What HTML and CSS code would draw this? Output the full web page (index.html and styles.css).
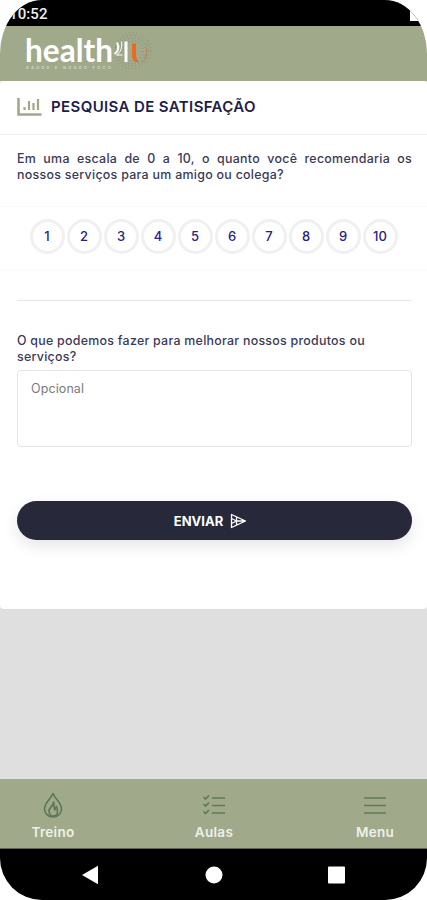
FILE: index.html
```
<!DOCTYPE html>
<html lang="pt-BR">
<head>
<meta charset="utf-8">
<meta name="viewport" content="width=device-width, initial-scale=1">
<title>Pesquisa de Satisfação</title>
<link rel="stylesheet" href="styles.css">
</head>
<body>
<div class="phone">
  <div class="status"><span class="time">10:52</span><span class="battery"></span></div>
  <header class="brand">
    <svg class="logo" width="134" height="46" viewBox="0 -2 134 46">
      <g fill="none" stroke="#858d78" stroke-width="1" stroke-dasharray="1 2.500">
        <circle cx="113" cy="21" r="18"/><circle cx="113" cy="21" r="15.500"/><circle cx="113" cy="21" r="13"/><circle cx="113" cy="21" r="10"/>
      </g>
      <text class="logo-name" x="5" y="32" textLength="88" lengthAdjust="spacingAndGlyphs">health</text>
      <path d="M97 12.500c2.500 5 1 9-2.500 11.500" fill="none" stroke="#fff" stroke-width="2"/>
      <path d="M101.500 11.500c1 6-1 11-5 13.500h6" fill="none" stroke="#fff" stroke-width="1"/>
      <path d="M106 11.500V32" fill="none" stroke="#fff" stroke-width="3"/>
      <path d="M112 13.500h4V25c0 3.500 1 5.500 3.500 7-4.500.8-7.500-2-7.500-7z" fill="#ee6820"/>
      <path d="M121.500 32c4-2 6-7 5-14" fill="none" stroke="#c78155" stroke-width="1"/>
      <text class="logo-tag" x="6" y="39" textLength="85">SAÚDE É NOSSO FOCO</text>
    </svg>
  </header>
  <main>
    <section class="card">
      <div class="title">
        <svg width="25" height="20" viewBox="0 0 25 20" fill="none" stroke="#a0a889">
          <path d="M1.500 1v16.500H24.500" stroke-width="2.600"/>
          <path d="M7.500 13v-3M12 13V4M16.500 13V6M21 13V2" stroke-width="2.200"/>
        </svg>
        <h1>PESQUISA DE SATISFAÇÃO</h1>
      </div>
      <p class="question">Em uma escala de 0 a 10, o quanto você recomendaria os nossos serviços para um amigo ou colega?</p>
      <div class="scale">
        <button>1</button><button>2</button><button>3</button><button>4</button><button>5</button><button>6</button><button>7</button><button>8</button><button>9</button><button>10</button>
      </div>
      <hr>
      <label class="label" for="msg">O que podemos fazer para melhorar nossos produtos ou serviços?</label>
      <textarea id="msg" placeholder="Opcional"></textarea>
      <button class="send">ENVIAR
        <svg width="17" height="16" viewBox="0 0 17 16" fill="none" stroke="#fff" stroke-width="1.300" stroke-linejoin="round"><path d="M1.500 1.500 15.500 8 1.500 14.500zM1.500 5.500l5 2.500-5 2.500M6.500 4.500V11.500M6.500 8h8"/></svg>
      </button>
    </section>
  </main>
  <nav class="tabs">
    <a class="tab"><svg width="24" height="26" viewBox="0 0 24 26" fill="none" stroke="#5a7854" stroke-width="1.600" stroke-linejoin="round"><path d="M12 1.500C10.500 6.500 3.500 10 3.500 17a8.500 8 0 0 0 17 0C20.500 10 13.500 6.500 12 1.500z"/><path d="M12.500 10c.5 4-4.500 5-4.500 9 0 3 2 5 4.300 5s4.200-2 4.200-4.500c0-2-.8-3.500-.8-5-1.400 1-1.700 2-1.700 3.500-1.700-2-.5-5-1.500-8z"/></svg><span>Treino</span></a>
    <a class="tab"><svg width="24" height="26" viewBox="0 0 24 26" fill="none" stroke="#5f7b58" stroke-width="1.700"><path d="M1.500 5l2 2L7 3.500M1.500 12l2 2L7 10.500M1.500 19.500l2 2L7 18M10 6h13M10 13.500h13M10 21h13"/></svg><span>Aulas</span></a>
    <a class="tab"><svg width="24" height="26" viewBox="0 0 24 26" fill="none" stroke="#5f7b58" stroke-width="1.700"><path d="M1 6h22M1 13.500h22M1 21h22"/></svg><span>Menu</span></a>
  </nav>
  <div class="system">
    <svg width="20" height="20" viewBox="0 0 20 20" fill="#fff"><path d="M2 10 18 .8v18.400z"/></svg>
    <svg width="20" height="20" viewBox="0 0 20 20" fill="#fff"><circle cx="10" cy="10" r="8.500"/></svg>
    <svg width="20" height="20" viewBox="0 0 20 20" fill="#fff"><rect x="1" y="1.500" width="17" height="17" rx="1"/></svg>
  </div>
</div>
</body>
</html>
```
FILE: styles.css
```
* { box-sizing: border-box; }
body { margin: 0; background: #fff; font-family: Inter, "Liberation Sans", sans-serif; color: #3a3a58; }
.phone { width: 427px; height: 900px; overflow: hidden; display: flex; flex-direction: column; background: #dfdfdf; border-radius: 42px 42px 42px 42px / 54px 54px 42px 42px; }
.status { height: 26px; flex: none; background: #000; display: flex; justify-content: space-between; padding: 6px 7px 0 9px; }
.time { color: #eee; font: 500 15px/17px Roboto, sans-serif; letter-spacing: .1px; }
.battery { width: 10px; height: 13px; margin-top: 2px; background: #fff; }
.brand { height: 55px; flex: none; background: #a1a98b; padding: 2px 0 0 20px; }
.logo { display: block; overflow: visible; }
.logo-name { font: 700 32px Lato, sans-serif; fill: #fff; }
.logo-tag { font: 700 4px Inter, sans-serif; fill: #d0d5c2; }
main { flex: 1; }
.card { height: 528px; background: #fff; border-radius: 3px 3px 4px 4px; padding: 0 15px 0 17px; display: flex; flex-direction: column; }
.title { height: 54px; flex: none; margin: 0 -15px 0 -17px; padding: 0 0 2px 17px; display: flex; align-items: center; gap: 9px; border-bottom: 1px solid #f0f0f0; }
h1 { margin: 0; font-size: 15px; font-weight: 600; line-height: 20px; letter-spacing: .38px; color: #211d49; white-space: nowrap; }
.question { margin: 16px 0 0; font-size: 12.400px; line-height: 15.500px; font-weight: 500; letter-spacing: .29px; text-align: justify; }
.scale { margin: 24px -15px 0 -17px; height: 64px; flex: none; border-top: 1px solid #fafafa; border-bottom: 1px solid #fafafa; display: flex; align-items: center; justify-content: center; gap: 2px; padding-bottom: 4px; }
.scale button { width: 35px; height: 35px; padding: 0; border: 3px solid #f0f0f0; border-radius: 50%; background: #fff; color: #29247c; font: 500 13px Inter, sans-serif; }
hr { width: 100%; margin: 30px 0 0; border: 0; border-top: 1px solid #e6e6e6; }
.label { margin-top: 32px; font-size: 12.400px; line-height: 15.500px; font-weight: 500; letter-spacing: .27px; }
textarea { margin-top: 6px; width: 395px; height: 77px; flex: none; border: 1px solid #e3e5e5; border-radius: 4px; padding: 9px 13px; resize: none; font: 400 12.500px/17px Inter, sans-serif; letter-spacing: .1px; color: #333; }
textarea::placeholder { color: #7b7b84; opacity: 1; }
.send { margin-top: 54px; height: 39px; flex: none; border: 0; border-radius: 20px; background: #28283b; color: #fff; font: 700 13px Inter, sans-serif; display: flex; align-items: center; justify-content: center; gap: 7px; padding: 0 14px 0 6px; box-shadow: 0 6px 16px rgba(0,0,0,.1); }
.tabs { height: 70px; flex: none; background: #a1a98b; display: flex; justify-content: space-between; padding: 13px 22px 0 23px; border-bottom: 1px solid #5e6450; }
.tab { width: 60px; display: flex; flex-direction: column; align-items: center; gap: 5px; color: #eef0e7; font-size: 13.500px; line-height: 18px; font-weight: 600; letter-spacing: .3px; }
.system { height: 51px; flex: none; background: #000; display: flex; align-items: center; justify-content: space-between; padding: 0 80px; }
```
